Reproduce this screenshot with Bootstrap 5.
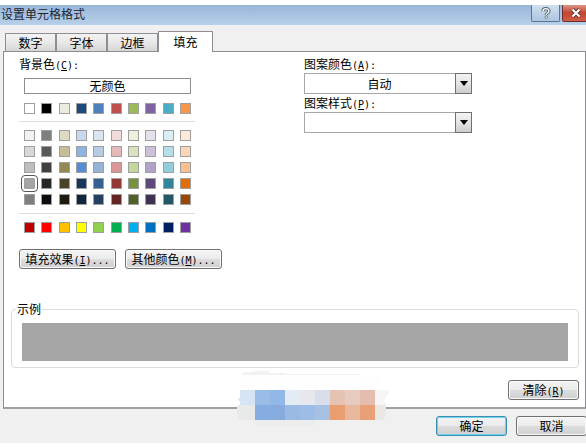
<!DOCTYPE html>
<html lang="zh-CN">
<head>
<meta charset="utf-8">
<meta name="viewport" content="width=device-width, initial-scale=1">
<title>设置单元格格式</title>
<link href="https://cdn.jsdelivr.net/npm/bootstrap@5.3.0/dist/css/bootstrap.min.css" rel="stylesheet">
<style>
body{font:12px/14px "Noto Sans CJK SC",sans-serif;color:#000;background:#fff;overflow-x:hidden}
button,select{font:inherit;color:inherit}
.key{font:10px/10px "DejaVu Sans Mono","Liberation Mono",monospace}
.frame{padding-top:5px}
.titlebar{height:20px;background:linear-gradient(#98b5d8,#b9d0ea);color:#1c2430;gap:2px;padding-left:1px;margin-right:-4px}
.caption{padding-top:2px}
.cap{height:17px;border:1px solid #5d7390;border-top:0;border-radius:0 0 2px 2px;background:linear-gradient(#cfdff0,#adc5e0);padding:0}
.cap-help{width:29px}
.cap-close{width:28px;background:linear-gradient(#dc9488,#c4452f 50%,#cf6049);border-color:#6d2f2a}
.dialog{background:#f0f0f0}
.tabs{padding:6px 0 0 5px}
.tabbtn{width:51px;height:18px;border:1px solid #8c8e94;border-bottom:0;background:linear-gradient(#f3f3f3,#e8e8e8 50%,#d6d6d6);padding:0}
.tabbtn.on{width:55px;height:21px;background:#fff;margin-bottom:-1px;z-index:1}
.pane{background:#fff;border:1px solid #8c8e94;border-bottom:2px solid #a0a0a0;margin:0 0 0 3px;padding:5px 6px 7px 15px}
.left{width:204px}
.caplabel{display:block;height:14px}
.nocolor{width:167px;height:16px;border:1px solid #8c8e94;background:#fff;padding:0;line-height:12px;margin:7px 0 9px 5px}
.pal{width:167px;margin-left:5px}
.palrow{display:flex;justify-content:space-between}
.sw{width:11px;height:11px;border:1px solid #a09f9f;padding:0}
.sw.sel{outline:1px solid #555;outline-offset:2px;border-radius:1px}
.rule{height:1px;width:176px;background:#dedede;margin:7px 0 8px}
.theme{display:grid;gap:5px}
.theme+.rule{margin-top:8px}
.win{height:20px;border:1px solid #707070;border-radius:3px;background:linear-gradient(#f4f4f4,#ebebeb 48%,#dcdcdc 52%,#d0d0d0);box-shadow:inset 0 0 0 1px #fafafa;padding:0;line-height:18px}
.wide{width:97px}
.pairs{gap:9px}
.std{width:71px}
.okbtn{border-color:#3c8fb2;box-shadow:inset 0 0 0 1px #6fd0ef}
.patterns{margin-right:107px}
.picker{width:168px;display:grid;margin:2px 0}
.picker>*{grid-area:1/1}
.picker select{appearance:none;height:21px;border:1px solid #a5a7ab;border-radius:0;background:#fff;padding:0 17px 0 0;text-align:center;text-align-last:center;line-height:16px}
.drop{width:17px;height:21px;border:1px solid #707070;background:linear-gradient(#f2f2f2,#e4e4e4 50%,#cdcdcd);justify-self:end;pointer-events:none}
.sample{border:1px solid #dcdcdc;border-radius:4px;margin:33px 0 0 -8px;padding:0 10px 6px 10px}
.sample legend{float:none;width:auto;font:12px/14px "Noto Sans CJK SC",sans-serif;margin:0 0 7px -6px;padding:0 1px}
.sampleblock{height:38px;background:#a5a5a5}
.actions{padding:7px 0 7px;margin-right:-1px}
.smudge{position:absolute;left:237px;top:370px;pointer-events:none}
</style>
<script src="https://cdn.jsdelivr.net/npm/bootstrap@5.3.0/dist/js/bootstrap.bundle.min.js"></script>
</head>
<body>
<main class="frame position-relative overflow-hidden">
<header class="titlebar d-flex align-items-start">
<span class="caption flex-grow-1">设置单元格格式</span>
<button class="cap cap-help d-flex align-items-center justify-content-center" aria-label="帮助"><svg width="10" height="12" viewBox="0 0 10 12"><path d="M2 4.2C2 .8 8 .8 8 4.1 8 6 5.4 6 5.2 8" fill="none" stroke="#555e6b" stroke-width="3.2"/><path d="M2 4.2C2 .8 8 .8 8 4.1 8 6 5.4 6 5.2 8" fill="none" stroke="#fff" stroke-width="1.4"/><circle cx="5.2" cy="10.2" r="1.3" fill="#fff" stroke="#555e6b" stroke-width=".8"/></svg></button>
<button class="cap cap-close d-flex align-items-center justify-content-center" aria-label="关闭"><svg width="12" height="10" viewBox="0 0 12 10"><path d="M2.5 1.5 9.5 8.5M9.5 1.5 2.5 8.5" stroke="#613331" stroke-width="4"/><path d="M2.5 1.5 9.5 8.5M9.5 1.5 2.5 8.5" stroke="#fff" stroke-width="2.2"/></svg></button>
</header>
<div class="dialog">
<nav class="tabs d-flex align-items-end" role="tablist">
<button class="tabbtn" role="tab">数字</button><button class="tabbtn" role="tab">字体</button><button class="tabbtn" role="tab">边框</button><button class="tabbtn on position-relative" role="tab" aria-selected="true">填充</button>
</nav>
<section class="pane">
<div class="d-flex">
<div class="left">
<div class="caplabel">背景色<span class="key">(<u>C</u>):</span></div>
<button class="nocolor d-block">无颜色</button>
<div class="pal palrow" data-colors="ffffff 000000 eeece1 1f497d 4f81bd c0504d 9bbb59 8064a2 4bacc6 f79646"></div>
<div class="rule"></div>
<div class="pal theme">
<div class="palrow" data-colors="f2f2f2 7f7f7f ddd9c3 c6d9f0 dbe5f1 f2dcdb ebf1dd e5e0ec dbeef3 fdeada"></div>
<div class="palrow" data-colors="d8d8d8 595959 c4bd97 8db3e2 b8cce4 e5b9b7 d7e3bc ccc1d9 b7dde8 fbd5b5"></div>
<div class="palrow" data-colors="bfbfbf 3f3f3f 938953 548dd4 95b3d7 d99694 c3d69b b2a2c7 92cddc fac08f"></div>
<div class="palrow" data-selected="0" data-colors="a5a5a5 262626 494429 17365d 366092 953734 76923c 5f497a 31859b e36c09"></div>
<div class="palrow" data-colors="7f7f7f 0c0c0c 1d1b10 0f243e 244061 632423 4f6128 3f3151 205867 974806"></div>
</div>
<div class="rule"></div>
<div class="pal palrow" data-colors="c00000 ff0000 ffc000 ffff00 92d050 00b050 00b0f0 0070c0 002060 7030a0"></div>
<div class="d-flex pairs mt-3">
<button class="win wide flex-shrink-0">填充效果<span class="key">(<u>I</u>)...</span></button>
<button class="win wide flex-shrink-0">其他颜色<span class="key">(<u>M</u>)...</span></button>
</div>
</div>
<div class="patterns ms-auto flex-shrink-0">
<label class="caplabel" for="pc">图案颜色<span class="key">(<u>A</u>):</span></label>
<div class="picker"><select id="pc"><option>自动</option></select><span class="drop d-flex align-items-center justify-content-center"><svg width="8" height="5"><path d="M0 0h8L4 5z"/></svg></span></div>
<label class="caplabel" for="ps">图案样式<span class="key">(<u>P</u>):</span></label>
<div class="picker"><select id="ps"><option aria-label="无"></option></select><span class="drop d-flex align-items-center justify-content-center"><svg width="8" height="5"><path d="M0 0h8L4 5z"/></svg></span></div>
</div>
</div>
<fieldset class="sample"><legend>示例</legend><div class="sampleblock"></div></fieldset>
<div class="d-flex justify-content-end mt-2 pt-1"><button class="win std">清除<span class="key">(<u>R</u>)</span></button></div>
</section>
<footer class="actions d-flex justify-content-end pairs">
<button class="win std okbtn">确定</button><button class="win std">取消</button>
</footer>
</div>
<svg class="smudge" width="154" height="60" viewBox="0 0 154 60" shape-rendering="crispEdges" aria-hidden="true">
<path d="M5 4 8 2h6l3-1h14l2 2h15v1h75v1H5z" fill="#f2f2f2"/>
<path d="M3 5h140v15H3z" fill="#fefefe"/>
<path d="M3 20h15v15H3v-3l-2-2 2-3z" fill="#d6e4f5"/><path d="M18 20h15v15H18z" fill="#9abde8"/><path d="M33 20h15v15H33z" fill="#92b7e9"/><path d="M48 20h15v15H48z" fill="#e3ebf5"/><path d="M63 20h15v15H63z" fill="#e7e8ed"/><path d="M78 20h15v15H78z" fill="#d9dfea"/><path d="M93 20h15v15H93z" fill="#e6c2b3"/><path d="M108 20h15v15h-15z" fill="#e6cbc1"/><path d="M123 20h15v15h-15z" fill="#e4bdaf"/><path d="M138 20h14v3l-4 6-1 3 3 3h-12z" fill="#f7f5f6"/>
<path d="M1 35h17v15H3l-3-6v-7z" fill="#e8eae9"/><path d="M18 35h18v15H18z" fill="#86ade1"/><path d="M36 35h12v15H36z" fill="#88abdf"/><path d="M48 35h15v15H48z" fill="#9ab9e3"/><path d="M63 35h15v15H63z" fill="#9ebde6"/><path d="M78 35h15v15H78z" fill="#a8c1e2"/><path d="M93 35h15v15H93z" fill="#e99e72"/><path d="M108 35h15v15h-15z" fill="#e9b79c"/><path d="M123 35h15v15h-15z" fill="#e8a077"/><path d="M138 35h11v8l-2 7h-9z" fill="#ebe7e4"/>
<path d="M18 50h60v6H18z" fill="#ededee"/>
</svg>
</main>
<script>
document.querySelectorAll('[data-colors]').forEach(row=>{
  row.dataset.colors.split(' ').forEach((c,i)=>{
    const b=document.createElement('button');
    b.className='sw'+(row.dataset.selected===String(i)?' sel':'');
    b.setAttribute('aria-label','#'+c);
    b.style.backgroundColor='#'+c;
    row.append(b);
  });
});
</script>
</body>
</html>
